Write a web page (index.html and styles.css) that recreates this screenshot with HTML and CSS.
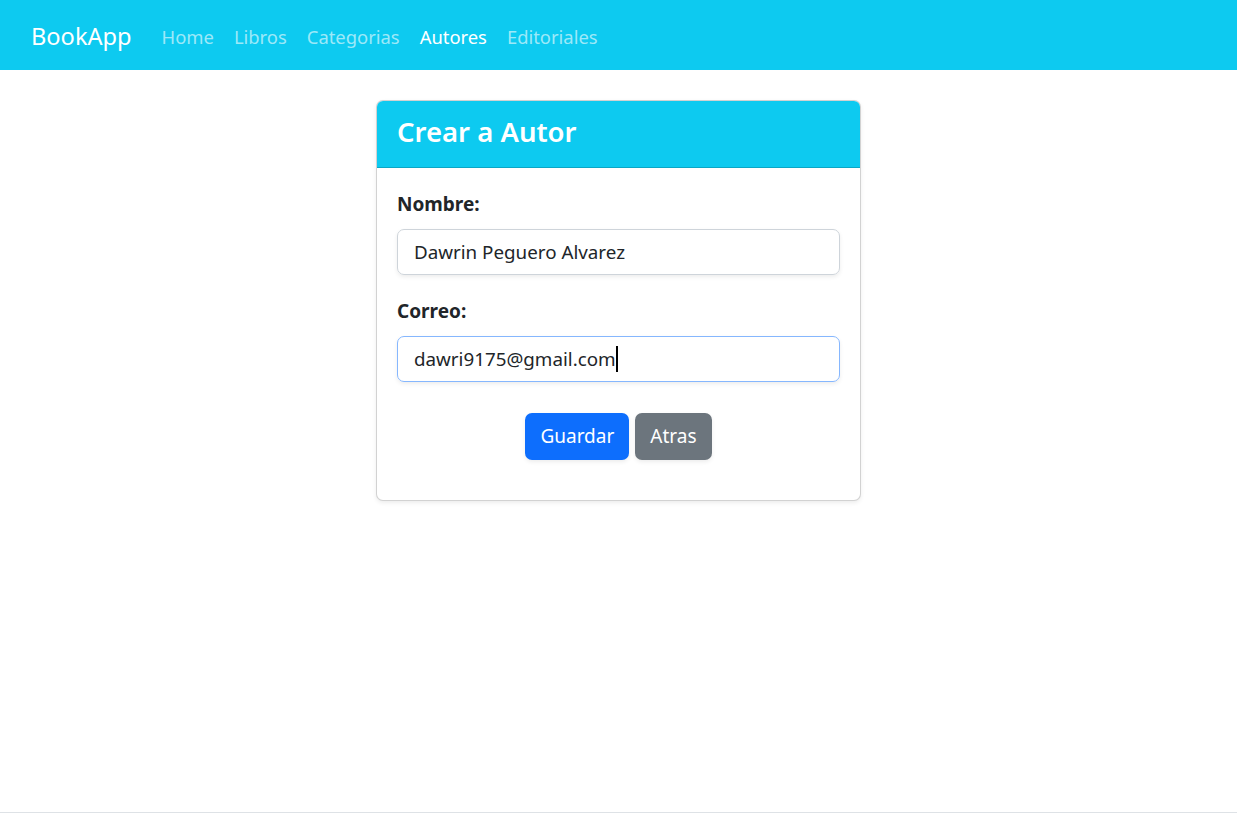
FILE: index.html
```html
<!DOCTYPE html>
<html lang="es">
<head>
<meta charset="utf-8">
<title>BookApp - Crear Autor</title>
<link rel="stylesheet" href="styles.css">
</head>
<body>
<nav class="navbar">
  <a class="brand" href="#">BookApp</a>
  <ul class="nav">
    <li><a class="nav-link" href="#">Home</a></li>
    <li><a class="nav-link" href="#">Libros</a></li>
    <li><a class="nav-link" href="#">Categorias</a></li>
    <li><a class="nav-link active" href="#">Autores</a></li>
    <li><a class="nav-link" href="#">Editoriales</a></li>
  </ul>
</nav>
<main class="main">
  <section class="card">
    <header class="card-header"><h4 class="card-title">Crear a Autor</h4></header>
    <div class="card-body">
      <div class="field">
        <label class="label">Nombre:</label>
        <div class="form-control" role="textbox">Dawrin Peguero Alvarez</div>
      </div>
      <div class="field">
        <label class="label">Correo:</label>
        <div class="form-control focused" role="textbox">dawri9175@gmail.com<span class="caret"></span></div>
      </div>
      <div class="actions">
        <button class="btn btn-primary">Guardar</button>
        <button class="btn btn-secondary">Atras</button>
      </div>
    </div>
  </section>
</main>
<footer class="footer"></footer>
</body>
</html>
```
FILE: styles.css
```css
* { box-sizing: border-box; }
html, body { margin: 0; padding: 0; }
body {
  font-family: "Noto Sans", "Open Sans", sans-serif;
  font-size: 20px;
  line-height: 1.5;
  color: #212529;
  background: #fff;
  height: 833px;
  display: flex;
  flex-direction: column;
}
.navbar {
  background: #0dcaf0;
  height: 70px;
  display: flex;
  align-items: center;
  padding: 3px 0 0 31px;
}
.brand {
  color: #fff;
  text-decoration: none;
  font-size: 23.6px;
  margin-right: 20px;
  line-height: 1;
}
.nav { list-style: none; margin: 0; padding: 0; display: flex; }
.nav-link {
  display: block;
  padding: 0 10px;
  color: rgba(255,255,255,0.6);
  text-decoration: none;
  font-size: 18.4px;
}
.nav-link.active { color: #fff; }
.main {
  flex: 1;
  display: flex;
  justify-content: center;
  padding-top: 30px;
}
.card {
  width: 485px;
  height: 401px;
  border: 1px solid rgba(0,0,0,0.175);
  border-radius: 7px;
  box-shadow: 0 2px 4px rgba(0,0,0,0.075);
  overflow: hidden;
  background: #fff;
}
.card-header {
  background: #0dcaf0;
  border-bottom: 1px solid rgba(0,0,0,0.175);
  height: 67px;
  padding: 0 20px;
  display: flex;
  align-items: center;
}
.card-title {
  margin: 0;
  color: #fff;
  font-size: 27.5px;
  font-weight: 600;
  line-height: 1.2;
  padding-bottom: 6px;
}
.card-body { padding: 21px 20px 20px; }
.field { margin-bottom: 21px; }
.label {
  display: block;
  font-weight: 700;
  font-size: 19px;
  line-height: 30px;
  margin-bottom: 10px;
}
.form-control {
  height: 46px;
  border: 1px solid #ced4da;
  border-radius: 7px;
  padding: 0 16px;
  display: flex;
  align-items: center;
  font-size: 18.8px;
  color: #212529;
  box-shadow: 0 2px 4px rgba(0,0,0,0.075);
}
.form-control.focused { border-color: #86b7fe; }
.caret {
  display: inline-block;
  width: 2px;
  height: 26px;
  background: #000;
  margin-left: 0;
}
.actions {
  display: flex;
  justify-content: center;
  gap: 6px;
  margin-top: 31px;
}
.btn {
  font-family: inherit;
  font-size: 19px;
  line-height: 1.5;
  height: 47px;
  padding: 0 15px;
  border: 0;
  border-radius: 7px;
  color: #fff;
  box-shadow: 0 2px 4px rgba(0,0,0,0.075);
}
.btn-primary { background: #0d6efd; }
.btn-secondary { background: #6c757d; }
.footer {
  height: 21px;
  border-top: 1px solid #dee2e6;
}
```
